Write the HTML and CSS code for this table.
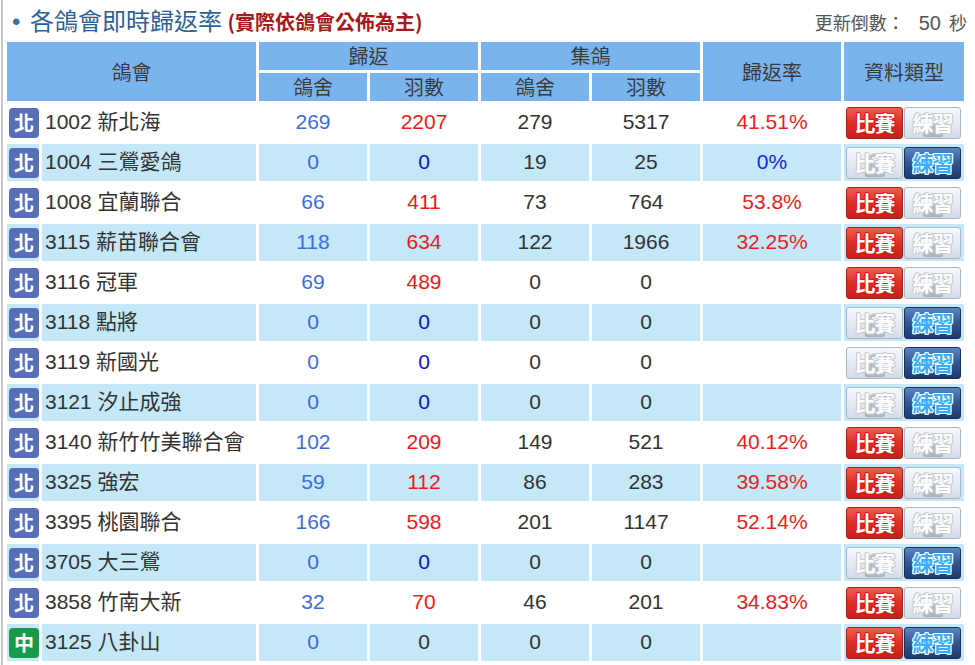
FILE: index.html
```html
<!DOCTYPE html>
<html lang="zh-Hant">
<head>
<meta charset="utf-8">
<title>各鴿會即時歸返率</title>
<link rel="stylesheet" href="styles.css">
</head>
<body>
<div class="wrap">
  <div class="titlebar">
    <h1 class="title"><span class="dot">•</span>各鴿會即時歸返率 <span class="note">(實際依鴿會公佈為主)</span></h1>
    <div class="countdown">更新倒數：<span class="sec">50</span>秒</div>
  </div>
  <table class="rates">
    <colgroup>
      <col class="c-badge"><col class="c-name"><col class="c-num"><col class="c-num"><col class="c-num"><col class="c-num"><col class="c-rate"><col class="c-type">
    </colgroup>
    <thead>
      <tr>
        <th colspan="2" rowspan="2">鴿會</th>
        <th colspan="2">歸返</th>
        <th colspan="2">集鴿</th>
        <th rowspan="2">歸返率</th>
        <th rowspan="2">資料類型</th>
      </tr>
      <tr>
        <th>鴿舍</th><th>羽數</th><th>鴿舍</th><th>羽數</th>
      </tr>
    </thead>
    <tbody>
      <tr>
        <td class="b"><span class="badge north">北</span></td><td class="name">1002 新北海</td>
        <td class="lofts">269</td><td class="birds">2207</td><td>279</td><td>5317</td><td class="rate">41.51%</td>
        <td class="type"><span class="btn race"><span class="lbl">比賽</span></span><span class="btn off"><svg class="lock" viewBox="0 0 24 28"><path d="M6.5 14V9a5.5 5.5 0 0 1 11 0V14" fill="none" stroke="#a9b1ba" stroke-width="3.5"/><rect x="1" y="13" width="22" height="15" rx="3" fill="#a3acb6"/></svg><span class="lbl">練習</span></span></td>
      </tr>
      <tr>
        <td class="b"><span class="badge north">北</span></td><td class="name">1004 三鶯愛鴿</td>
        <td class="lofts">0</td><td class="birds zero">0</td><td>19</td><td>25</td><td class="rate zero">0%</td>
        <td class="type"><span class="btn off"><svg class="lock" viewBox="0 0 24 28"><path d="M6.5 14V9a5.5 5.5 0 0 1 11 0V14" fill="none" stroke="#a9b1ba" stroke-width="3.5"/><rect x="1" y="13" width="22" height="15" rx="3" fill="#a3acb6"/></svg><span class="lbl">比賽</span></span><span class="btn train"><span class="lbl">練習</span></span></td>
      </tr>
      <tr>
        <td class="b"><span class="badge north">北</span></td><td class="name">1008 宜蘭聯合</td>
        <td class="lofts">66</td><td class="birds">411</td><td>73</td><td>764</td><td class="rate">53.8%</td>
        <td class="type"><span class="btn race"><span class="lbl">比賽</span></span><span class="btn off"><svg class="lock" viewBox="0 0 24 28"><path d="M6.5 14V9a5.5 5.5 0 0 1 11 0V14" fill="none" stroke="#a9b1ba" stroke-width="3.5"/><rect x="1" y="13" width="22" height="15" rx="3" fill="#a3acb6"/></svg><span class="lbl">練習</span></span></td>
      </tr>
      <tr>
        <td class="b"><span class="badge north">北</span></td><td class="name">3115 薪苗聯合會</td>
        <td class="lofts">118</td><td class="birds">634</td><td>122</td><td>1966</td><td class="rate">32.25%</td>
        <td class="type"><span class="btn race"><span class="lbl">比賽</span></span><span class="btn off"><svg class="lock" viewBox="0 0 24 28"><path d="M6.5 14V9a5.5 5.5 0 0 1 11 0V14" fill="none" stroke="#a9b1ba" stroke-width="3.5"/><rect x="1" y="13" width="22" height="15" rx="3" fill="#a3acb6"/></svg><span class="lbl">練習</span></span></td>
      </tr>
      <tr>
        <td class="b"><span class="badge north">北</span></td><td class="name">3116 冠軍</td>
        <td class="lofts">69</td><td class="birds">489</td><td>0</td><td>0</td><td class="rate"></td>
        <td class="type"><span class="btn race"><span class="lbl">比賽</span></span><span class="btn off"><svg class="lock" viewBox="0 0 24 28"><path d="M6.5 14V9a5.5 5.5 0 0 1 11 0V14" fill="none" stroke="#a9b1ba" stroke-width="3.5"/><rect x="1" y="13" width="22" height="15" rx="3" fill="#a3acb6"/></svg><span class="lbl">練習</span></span></td>
      </tr>
      <tr>
        <td class="b"><span class="badge north">北</span></td><td class="name">3118 點將</td>
        <td class="lofts">0</td><td class="birds zero">0</td><td>0</td><td>0</td><td class="rate"></td>
        <td class="type"><span class="btn off"><svg class="lock" viewBox="0 0 24 28"><path d="M6.5 14V9a5.5 5.5 0 0 1 11 0V14" fill="none" stroke="#a9b1ba" stroke-width="3.5"/><rect x="1" y="13" width="22" height="15" rx="3" fill="#a3acb6"/></svg><span class="lbl">比賽</span></span><span class="btn train"><span class="lbl">練習</span></span></td>
      </tr>
      <tr>
        <td class="b"><span class="badge north">北</span></td><td class="name">3119 新國光</td>
        <td class="lofts">0</td><td class="birds zero">0</td><td>0</td><td>0</td><td class="rate"></td>
        <td class="type"><span class="btn off"><svg class="lock" viewBox="0 0 24 28"><path d="M6.5 14V9a5.5 5.5 0 0 1 11 0V14" fill="none" stroke="#a9b1ba" stroke-width="3.5"/><rect x="1" y="13" width="22" height="15" rx="3" fill="#a3acb6"/></svg><span class="lbl">比賽</span></span><span class="btn train"><span class="lbl">練習</span></span></td>
      </tr>
      <tr>
        <td class="b"><span class="badge north">北</span></td><td class="name">3121 汐止成強</td>
        <td class="lofts">0</td><td class="birds zero">0</td><td>0</td><td>0</td><td class="rate"></td>
        <td class="type"><span class="btn off"><svg class="lock" viewBox="0 0 24 28"><path d="M6.5 14V9a5.5 5.5 0 0 1 11 0V14" fill="none" stroke="#a9b1ba" stroke-width="3.5"/><rect x="1" y="13" width="22" height="15" rx="3" fill="#a3acb6"/></svg><span class="lbl">比賽</span></span><span class="btn train"><span class="lbl">練習</span></span></td>
      </tr>
      <tr>
        <td class="b"><span class="badge north">北</span></td><td class="name">3140 新竹竹美聯合會</td>
        <td class="lofts">102</td><td class="birds">209</td><td>149</td><td>521</td><td class="rate">40.12%</td>
        <td class="type"><span class="btn race"><span class="lbl">比賽</span></span><span class="btn off"><svg class="lock" viewBox="0 0 24 28"><path d="M6.5 14V9a5.5 5.5 0 0 1 11 0V14" fill="none" stroke="#a9b1ba" stroke-width="3.5"/><rect x="1" y="13" width="22" height="15" rx="3" fill="#a3acb6"/></svg><span class="lbl">練習</span></span></td>
      </tr>
      <tr>
        <td class="b"><span class="badge north">北</span></td><td class="name">3325 強宏</td>
        <td class="lofts">59</td><td class="birds">112</td><td>86</td><td>283</td><td class="rate">39.58%</td>
        <td class="type"><span class="btn race"><span class="lbl">比賽</span></span><span class="btn off"><svg class="lock" viewBox="0 0 24 28"><path d="M6.5 14V9a5.5 5.5 0 0 1 11 0V14" fill="none" stroke="#a9b1ba" stroke-width="3.5"/><rect x="1" y="13" width="22" height="15" rx="3" fill="#a3acb6"/></svg><span class="lbl">練習</span></span></td>
      </tr>
      <tr>
        <td class="b"><span class="badge north">北</span></td><td class="name">3395 桃園聯合</td>
        <td class="lofts">166</td><td class="birds">598</td><td>201</td><td>1147</td><td class="rate">52.14%</td>
        <td class="type"><span class="btn race"><span class="lbl">比賽</span></span><span class="btn off"><svg class="lock" viewBox="0 0 24 28"><path d="M6.5 14V9a5.5 5.5 0 0 1 11 0V14" fill="none" stroke="#a9b1ba" stroke-width="3.5"/><rect x="1" y="13" width="22" height="15" rx="3" fill="#a3acb6"/></svg><span class="lbl">練習</span></span></td>
      </tr>
      <tr>
        <td class="b"><span class="badge north">北</span></td><td class="name">3705 大三鶯</td>
        <td class="lofts">0</td><td class="birds zero">0</td><td>0</td><td>0</td><td class="rate"></td>
        <td class="type"><span class="btn off"><svg class="lock" viewBox="0 0 24 28"><path d="M6.5 14V9a5.5 5.5 0 0 1 11 0V14" fill="none" stroke="#a9b1ba" stroke-width="3.5"/><rect x="1" y="13" width="22" height="15" rx="3" fill="#a3acb6"/></svg><span class="lbl">比賽</span></span><span class="btn train"><span class="lbl">練習</span></span></td>
      </tr>
      <tr>
        <td class="b"><span class="badge north">北</span></td><td class="name">3858 竹南大新</td>
        <td class="lofts">32</td><td class="birds">70</td><td>46</td><td>201</td><td class="rate">34.83%</td>
        <td class="type"><span class="btn race"><span class="lbl">比賽</span></span><span class="btn off"><svg class="lock" viewBox="0 0 24 28"><path d="M6.5 14V9a5.5 5.5 0 0 1 11 0V14" fill="none" stroke="#a9b1ba" stroke-width="3.5"/><rect x="1" y="13" width="22" height="15" rx="3" fill="#a3acb6"/></svg><span class="lbl">練習</span></span></td>
      </tr>
      <tr>
        <td class="b"><span class="badge central">中</span></td><td class="name">3125 八卦山</td>
        <td class="lofts">0</td><td class="birds plain">0</td><td>0</td><td>0</td><td class="rate"></td>
        <td class="type"><span class="btn race"><span class="lbl">比賽</span></span><span class="btn train"><span class="lbl">練習</span></span></td>
      </tr>
    </tbody>
  </table>
</div>
</body>
</html>
```

FILE: styles.css
```css
* { box-sizing: border-box; }
html, body { margin: 0; padding: 0; background: #fff; }
body {
  font-family: "Liberation Sans", "Noto Sans CJK TC", sans-serif;
  color: #333;
  overflow: hidden;
}
.wrap {
  margin-left: 1px;
  border-left: 2px solid #c6c6c6;
  min-height: 665px;
}
.titlebar {
  display: flex;
  align-items: baseline;
  justify-content: space-between;
  height: 39px;
  padding: 1px 8px 0 9px;
}
.title {
  margin: 0;
  font-family: "Noto Sans CJK TC", sans-serif;
  font-size: 24px;
  line-height: 37px;
  font-weight: normal;
  color: #2d6196;
  white-space: nowrap;
}
.dot {
  display: inline-block;
  width: 18px;
  font-family: "Liberation Sans", sans-serif;
  color: #3a6ea5;
}
.note {
  font-size: 20px;
  font-weight: bold;
  color: #a8191c;
}
.countdown {
  font-family: "Noto Sans CJK TC", sans-serif;
  font-size: 18px;
  color: #555;
  white-space: nowrap;
}
.sec {
  font-family: "Liberation Sans", sans-serif;
  font-size: 20px;
  margin: 0 8px 0 14px;
}
.rates {
  margin-left: 1px;
  width: 963px;
  table-layout: fixed;
  border-collapse: separate;
  border-spacing: 3px;
  font-size: 21px;
}
.c-badge { width: 32px; }
.c-name { width: 214px; }
.c-num { width: 108px; }
.c-rate { width: 138px; }
.c-type { width: 120px; }
.rates th {
  height: 28px;
  padding: 0;
  background: #7ab4ee;
  color: #3a3a3a;
  font-family: "Noto Sans CJK TC", sans-serif;
  font-weight: normal;
  font-size: 20px;
  line-height: 26px;
  text-align: center;
  vertical-align: middle;
}
.rates td {
  height: 37px;
  padding: 0 0 2px;
  text-align: center;
  vertical-align: middle;
  line-height: 24px;
  white-space: nowrap;
}
.rates tbody tr:nth-child(even) td { background: #c4e8f7; }
.rates td.b { text-align: left; padding: 0 0 0 2px; }
.rates td.name { text-align: left; padding-left: 3px; }
.badge {
  display: inline-flex;
  align-items: center;
  justify-content: center;
  width: 30px;
  height: 30px;
  border-radius: 4px;
  color: #fff;
  font-family: "Noto Sans CJK TC", sans-serif;
  font-weight: bold;
  font-size: 20px;
  line-height: 1;
  vertical-align: middle;
}
.north { background: #566fb6; }
.central { background: #179b4a; }
.lofts { color: #3d6ce0; }
.birds { color: #f01818; }
.birds.zero { color: #1212c8; }
.birds.plain { color: #333; }
.rate { color: #f01c1c; }
.rate.zero { color: #1a22e6; }
.rates td.type { text-align: left; padding: 0 0 0 2px; font-size: 0; }
.btn {
  display: inline-grid;
  place-items: center;
  width: 57px;
  height: 32px;
  border: 1px solid;
  border-radius: 3px;
  vertical-align: middle;
  font-family: "Noto Sans CJK TC", sans-serif;
  font-weight: bold;
  font-size: 21px;
  line-height: 1;
}
.btn + .btn { margin-left: 1px; }
.btn > * { grid-area: 1 / 1; }
.lbl { position: relative; letter-spacing: -1px; }
.race {
  background: linear-gradient(#ee5f52, #dc3328 45%, #c71f19);
  border-color: #a8201b;
  color: #fff;
  text-shadow: 1px 0 0 #e4141a, -1px 0 0 #e4141a, 0 1px 0 #e4141a, 0 -1px 0 #e4141a,
    1px 1px 0 #e4141a, -1px -1px 0 #e4141a, 1px -1px 0 #e4141a, -1px 1px 0 #e4141a;
}
.train {
  background: linear-gradient(#5b86c2, #2f5592 50%, #1d3b6d);
  border-color: #172f5a;
  color: #3aacf8;
  text-shadow: 1px 0 0 #fff, -1px 0 0 #fff, 0 1px 0 #fff, 0 -1px 0 #fff,
    1px 1px 0 #eaf6ff, -1px -1px 0 #eaf6ff, 1px -1px 0 #eaf6ff, -1px 1px 0 #eaf6ff;
}
.off {
  background: linear-gradient(#f7f9fc, #e3eaf2 55%, #d2dce7);
  border-color: #a9b8c8;
  color: #fdfdfd;
  text-shadow: 1px 0 0 #c4cad1, -1px 0 0 #c4cad1, 0 1px 0 #c4cad1, 0 -1px 0 #c4cad1,
    1px 1px 0 #d0d5db, -1px -1px 0 #d0d5db;
}
.lock {
  width: 22px;
  height: 27px;
  align-self: end;
  opacity: 0.8;
}
```
